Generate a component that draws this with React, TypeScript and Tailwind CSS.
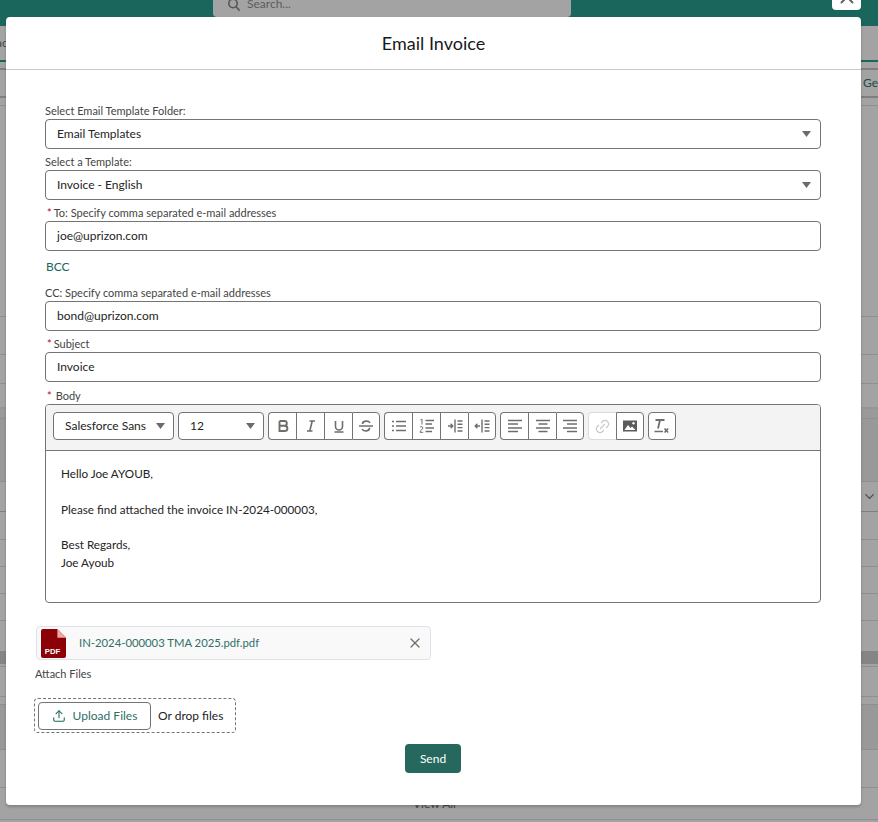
import {ChevronDown, Link2, Upload, X} from "lucide-react";
import type {ReactNode} from "react";

const BG = "bg-[#a3a3a3]";
const LINE = "bg-[#8f8f8f]";
const DARK = "bg-[#7f7f7f]";

const backdropRows: [number, string, ReactNode?][] = [
  [34, BG, <span className="-ml-[4px] text-[12px] text-[#3e4a48]">ac</span>],
  [2, "bg-[#1b665c]"],
  [6, BG],
  [2, DARK],
  [26, BG, <span className="ml-auto text-[12px] text-[#1c4a44]">Ge</span>],
  [2, DARK],
  [7, BG],
  [1, LINE],
  [210, BG],
  [1, LINE],
  [37, BG],
  [1, LINE],
  [28, BG],
  [1, LINE],
  [23, BG],
  [2, "bg-[#959595]"],
  [9, "bg-[#9a9a9a]"],
  [1, LINE],
  [62, "bg-[#999999]"],
  [1, LINE],
  [29, BG, <ChevronDown size={15} className="mr-[1px] ml-auto text-[#4a4a4a]" />],
  [1, DARK],
  [27, BG],
  [1, LINE],
  [26, BG],
  [1, LINE],
  [26, BG],
  [1, LINE],
  [26, BG],
  [1, LINE],
  [30, BG],
  [13, "bg-[#858585]"],
  [2, BG],
  [1, LINE],
  [29, BG],
  [1, LINE],
  [7, BG],
  [1, LINE],
  [44, "bg-[#999999]"],
  [1, LINE],
  [37, BG],
  [1, LINE],
  [31, BG, <span className="ml-[413px] text-[12px] text-[#3e4a48]">View All</span>],
  [1, LINE],
];

const Backdrop = () => (
  <div className="flex h-[822px] w-[878px] flex-col overflow-hidden bg-[#a3a3a3]">
    <div className="flex h-[26px] shrink-0 items-start bg-[#1b665c]">
      <div className="ml-[213px] flex h-[17px] w-[358px] items-start gap-[6px] rounded-b bg-[#a3a3a3] pl-[14px] text-[12px] text-[#5c5c5c]">
        <svg width="14" height="14" viewBox="0 0 14 14" fill="none" stroke="#555" strokeWidth="1.6" className="-mt-[2px]">
          <circle cx="6" cy="5.5" r="4.2" />
          <path d="M9 8.8l3.6 3.8" />
        </svg>
        <span className="-mt-[5px]">Search...</span>
      </div>
    </div>
    {backdropRows.map(([height, color, content], index) => (
      <div key={index} className={`flex shrink-0 items-center ${color}`} style={{height}}>
        {content}
      </div>
    ))}
  </div>
);

const Label = ({required, children}: {required?: boolean; children: ReactNode}) => (
  <div className="h-[21px] pt-[5px] text-[11px] leading-[16px] text-[#444444]">
    {required && <span className="mr-[2px] ml-[2px] text-[#ba0517]">*</span>}
    {children}
  </div>
);

const Caret = () => (
  <svg width="9" height="6" viewBox="0 0 9 6" fill="#6b6b6b">
    <path d="M0 0h9L4.5 6z" />
  </svg>
);

const Field = ({label, required, value, select}: {label: string; required?: boolean; value: string; select?: boolean}) => (
  <div>
    <Label required={required}>{label}</Label>
    <div className="flex h-[30px] items-center justify-between rounded border border-[#747474] pr-[9px] pl-[11px] text-[12px] text-[#242424]">
      <span>{value}</span>
      {select && <Caret />}
    </div>
  </div>
);

const ToolButton = ({children, className = ""}: {children: ReactNode; className?: string}) => (
  <div className={`flex h-[28px] w-[28px] items-center justify-center border-y border-l border-[#747474] bg-white text-[#706e6b] ${className}`}>
    {children}
  </div>
);

const Icon = ({children}: {children: ReactNode}) => (
  <svg width="16" height="16" viewBox="0 0 16 16" fill="none" stroke="#706e6b" strokeWidth="1.5">
    {children}
  </svg>
);

const Toolbar = () => (
  <div className="flex h-[46px] items-start gap-[4px] border-b border-[#747474] bg-[#f3f3f3] px-[7px] pt-[7px]">
    <div className="flex h-[28px] w-[121px] items-center justify-between rounded border border-[#747474] bg-white pr-[8px] pl-[11px] text-[12px] text-[#242424]">
      <span>Salesforce Sans</span>
      <Caret />
    </div>
    <div className="flex h-[28px] w-[86px] items-center justify-between rounded border border-[#747474] bg-white pr-[8px] pl-[11px] text-[12px] text-[#242424]">
      <span>12</span>
      <Caret />
    </div>
    <div className="flex">
      <ToolButton className="rounded-l">
        <Icon>
          <path d="M4.5 3H9.5Q11.8 3 11.8 5.4Q11.8 7.8 9.5 7.8H4.5M9.5 7.8Q12.4 7.8 12.4 10.4Q12.4 13 9.5 13H4.5V3" strokeWidth="1.9" />
        </Icon>
      </ToolButton>
      <ToolButton>
        <Icon>
          <path d="M6.5 3H12M4 13H9.5M9.2 3L6.8 13" strokeWidth="1.6" />
        </Icon>
      </ToolButton>
      <ToolButton>
        <Icon>
          <path d="M4.5 3V8.5A3.5 3.5 0 0 0 11.5 8.5V3M3.5 14H12.5" strokeWidth="1.6" />
        </Icon>
      </ToolButton>
      <ToolButton className="rounded-r border-r">
        <Icon>
          <path d="M1 8H15" strokeWidth="1.4" />
          <path d="M12 4.8C10.5 2.3 4.5 2.5 4.5 6M11.5 9.8C11.8 13.5 5.5 13.8 4 11.2" strokeWidth="1.6" />
        </Icon>
      </ToolButton>
    </div>
    <div className="flex">
      <ToolButton className="rounded-l">
        <Icon>
          <path d="M5 3.5H15M5 8H15M5 12.5H15M1 3.5H3M1 8H3M1 12.5H3" />
        </Icon>
      </ToolButton>
      <ToolButton>
        <Icon>
          <path d="M6.5 2.5H15M6.5 6H13M6.5 10H15M6.5 13.5H13" />
          <path d="M1.5 2L3 1.2V6.5M1 9.2C2 8 4 8.5 3.8 10C3.6 11.3 1.4 12.2 1 14.3H4.2" strokeWidth="1" />
        </Icon>
      </ToolButton>
      <ToolButton>
        <Icon>
          <path d="M8 1.5V14.5M10.5 3H15.5M10.5 6.3H15.5M10.5 9.6H15.5M10.5 13H15.5" strokeWidth="1.4" />
          <path d="M1 8H5.5M3.6 5.8L5.8 8L3.6 10.2" strokeWidth="1.4" />
        </Icon>
      </ToolButton>
      <ToolButton className="rounded-r border-r">
        <Icon>
          <path d="M8 1.5V14.5M10.5 3H15.5M10.5 6.3H15.5M10.5 9.6H15.5M10.5 13H15.5" strokeWidth="1.4" />
          <path d="M6 8H1.5M3.4 5.8L1.2 8L3.4 10.2" strokeWidth="1.4" />
        </Icon>
      </ToolButton>
    </div>
    <div className="flex">
      <ToolButton className="rounded-l">
        <Icon>
          <path d="M1 2.5H15M1 6H11M1 10H15M1 13.5H11" />
        </Icon>
      </ToolButton>
      <ToolButton>
        <Icon>
          <path d="M1 2.5H15M3.5 6H12.5M1 10H15M3.5 13.5H12.5" />
        </Icon>
      </ToolButton>
      <ToolButton className="rounded-r border-r">
        <Icon>
          <path d="M1 2.5H15M5 6H15M1 10H15M5 13.5H15" />
        </Icon>
      </ToolButton>
    </div>
    <div className="flex">
      <ToolButton className="rounded-l !border-[#dddbda]">
        <Link2 size={17} strokeWidth={1.7} className="-rotate-45 text-[#c9c9c9]" />
      </ToolButton>
      <ToolButton className="rounded-r border-r">
        <svg width="14" height="12" viewBox="0 0 14 12" fill="#5c5c5c">
          <path d="M0 0.5h14v11H0z" />
          <path d="M1.5 10l3.5-5 2.5 3 1.5-1.5 3.5 3.5z" fill="#fff" />
          <circle cx="10.5" cy="3.3" r="1.2" fill="#fff" />
        </svg>
      </ToolButton>
    </div>
    <ToolButton className="rounded border-r">
      <svg width="16" height="16" viewBox="0 0 16 16" fill="none" stroke="#706e6b">
        <path d="M1.5 2H10.5M6 2L4 10.5" strokeWidth="1.8" />
        <path d="M0.5 13.5H9" strokeWidth="1.4" />
        <path d="M10.5 10.5l3.6 4M14.1 10.5l-3.6 4" strokeWidth="1.6" />
      </svg>
    </ToolButton>
  </div>
);

const PdfIcon = () => (
  <svg width="25" height="29" viewBox="0 0 26 30" className="shrink-0">
    <path d="M2 0H17L26 9V28a2 2 0 0 1-2 2H2a2 2 0 0 1-2-2V2a2 2 0 0 1 2-2z" fill="#8c0008" />
    <path d="M17 0L26 9H17z" fill="#f0a79f" />
    <text x="12" y="25.5" textAnchor="middle" fontSize="8" fontWeight="700" fill="#fff" fontFamily="'Liberation Sans', sans-serif">PDF</text>
  </svg>
);

export default function App() {
  return (
    <div className="relative h-[822px] w-[878px] overflow-hidden font-['Lato',sans-serif]">
      <Backdrop />
      <div className="absolute top-[-19px] right-[17px] flex h-[29px] w-[29px] items-end justify-center rounded bg-white pb-[2px]">
        <X size={22} strokeWidth={2} className="text-[#5c5c5c]" />
      </div>
      <div className="absolute top-[17px] left-[6px] flex h-[788px] w-[855px] flex-col rounded bg-white shadow-[0_2px_3px_rgba(0,0,0,0.2)]">
        <div className="flex h-[53px] shrink-0 items-center justify-center border-b border-[#c9c9c9] text-[18px] text-[#181818]">
          Email Invoice
        </div>
        <div className="flex flex-1 flex-col pt-[28px]">
          <div className="ml-[39px] w-[776px]">
            <Field label="Select Email Template Folder:" value="Email Templates" select />
            <Field label="Select a Template:" value="Invoice - English" select />
            <Field label="To: Specify comma separated e-mail addresses" value="joe@uprizon.com" required />
            <div className="h-[29px] pt-[7px] pl-px text-[12px] leading-[18px] text-[#1b665c]">BCC</div>
            <Field label="CC: Specify comma separated e-mail addresses" value="bond@uprizon.com" />
            <Field label="Subject" value="Invoice" required />
            <div className="pt-px">
              <Label required><span className="ml-[2px]">Body</span></Label>
            </div>
            <div className="h-[199px] overflow-hidden rounded border border-[#747474]">
              <Toolbar />
              <div className="px-[15px] pt-[13px] text-[11.7px] leading-[18px] text-[#242424]">
                <p>Hello Joe AYOUB,</p>
                <p className="mt-[18px]">Please find attached the invoice IN-2024-000003,</p>
                <p className="mt-[17px]">Best Regards,</p>
                <p>Joe Ayoub</p>
              </div>
            </div>
          </div>
          <div className="mt-[23px] ml-[30px] flex h-[34px] w-[395px] items-center rounded border border-[#dfe1ea] bg-[#f9f9fa] pr-[7px] pl-[4px]">
            <PdfIcon />
            <span className="ml-[13px] flex-1 text-[11.3px] text-[#2f6f66]">IN-2024-000003 TMA 2025.pdf.pdf</span>
            <X size={16} strokeWidth={1.8} className="text-[#706e6b]" />
          </div>
          <div className="mt-[6px] ml-[29px] text-[11px] leading-[16px] text-[#444444]">Attach Files</div>
          <div className="mt-[16px] ml-[28px] flex h-[35px] w-[202px] items-center rounded border border-dashed border-[#747474] pl-[3px]">
            <div className="flex h-[28px] w-[113px] items-center justify-center gap-[7px] rounded border border-[#747474] text-[12px] text-[#2f6f66]">
              <Upload size={14} strokeWidth={1.8} className="text-[#1b665c]" />
              Upload Files
            </div>
            <span className="ml-[7px] text-[12px] text-[#242424]">Or drop files</span>
          </div>
          <div className="mt-[11px] flex justify-center pr-px">
            <div className="flex h-[29px] w-[56px] items-center justify-center rounded bg-[#27685e] text-[12px] text-white">Send</div>
          </div>
        </div>
      </div>
    </div>
  );
}
